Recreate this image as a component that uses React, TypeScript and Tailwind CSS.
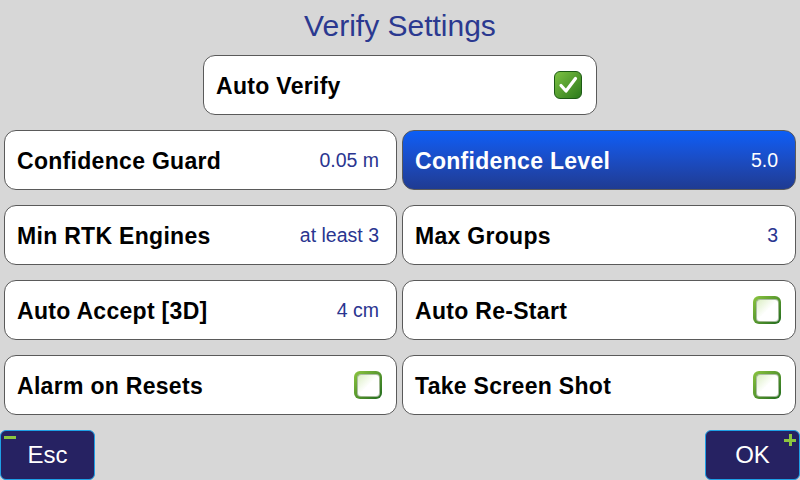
import React, { useState } from "react";

interface Setting {
  label: string;
  value?: string;
  checkbox?: boolean;
  checked?: boolean;
  active?: boolean;
}

const settings: Setting[] = [
  { label: "Confidence Guard", value: "0.05 m" },
  { label: "Confidence Level", value: "5.0", active: true },
  { label: "Min RTK Engines", value: "at least 3" },
  { label: "Max Groups", value: "3" },
  { label: "Auto Accept [3D]", value: "4 cm" },
  { label: "Auto Re-Start", checkbox: true, checked: false },
  { label: "Alarm on Resets", checkbox: true, checked: false },
  { label: "Take Screen Shot", checkbox: true, checked: false },
];

const CheckBox: React.FC<{ checked: boolean }> = ({ checked }) => {
  if (checked) {
    return (
      <div className="w-[28px] h-[28px] rounded-[6px] border-[1.5px] border-[#1c5a14] bg-gradient-to-br from-[#7cc242] to-[#2a7a1c] flex items-center justify-center">
        <svg width="22" height="22" viewBox="0 0 22 22">
          <path
            d="M4 11.5 L9 17 L18.5 4.5"
            fill="none"
            stroke="#ffffff"
            strokeWidth="3.2"
            strokeLinecap="round"
            strokeLinejoin="round"
          />
        </svg>
      </div>
    );
  }
  return (
    <div className="w-[28px] h-[28px] rounded-[6px] bg-gradient-to-br from-[#8cc63f] to-[#1e6b1e] p-[2.5px]">
      <div className="w-full h-full rounded-[4px] bg-gradient-to-br from-[#dcefc4] via-[#ffffff] to-[#ffffff] border border-[#2e5a1c]/40" />
    </div>
  );
};

const SettingRow: React.FC<{ item: Setting; onToggle: () => void }> = ({ item, onToggle }) => {
  const base =
    "h-[60px] rounded-[12px] border-[1.5px] border-[#5a5a5a] flex items-center justify-between pl-[12px] cursor-pointer";
  return (
    <div
      onClick={onToggle}
      className={`${base} ${
        item.active
          ? "bg-gradient-to-b from-[#0a5ef7] to-[#1f3b92] text-white"
          : "bg-white text-black"
      } ${item.checkbox ? "pr-[14px]" : "pr-[17px]"}`}
    >
      <span className="text-[23px] font-bold tracking-[0.3px] pt-[2px]">{item.label}</span>
      {item.checkbox ? (
        <CheckBox checked={!!item.checked} />
      ) : (
        <span className={`text-[19.5px] pt-[1px] ${item.active ? "text-white" : "text-[#2a3590]"}`}>
          {item.value}
        </span>
      )}
    </div>
  );
};

const App: React.FC = () => {
  const [autoVerify, setAutoVerify] = useState(true);
  const [rows, setRows] = useState<Setting[]>(settings);

  const toggle = (i: number) => {
    setRows((prev) =>
      prev.map((r, idx) => (idx === i && r.checkbox ? { ...r, checked: !r.checked } : r)),
    );
  };

  return (
    <div
      className="w-[800px] h-[480px] bg-[#d7d7d7] flex flex-col overflow-hidden"
      style={{ fontFamily: '"Liberation Sans", Arial, sans-serif' }}
    >
      <div className="h-[52px] flex items-center justify-center text-[30px] text-[#2b3990]">
        Verify Settings
      </div>

      <div className="mt-[4px] flex justify-center">
        <div
          onClick={() => setAutoVerify(!autoVerify)}
          className="w-[394px] h-[60px] rounded-[12px] border-[1.5px] border-[#5a5a5a] bg-white flex items-center justify-between pl-[12px] pr-[14px] cursor-pointer"
        >
          <span className="text-[23px] font-bold tracking-[0.3px] pt-[2px] text-black">Auto Verify</span>
          <CheckBox checked={autoVerify} />
        </div>
      </div>

      <div className="mt-[15px] px-[4px] grid grid-cols-[393px_394px] gap-x-[5px] gap-y-[15px]">
        {rows.map((item, i) => (
          <SettingRow key={item.label} item={item} onToggle={() => toggle(i)} />
        ))}
      </div>

      <div className="mt-[15px] flex justify-between">
        <button className="relative w-[95px] h-[50px] bg-[#262262] border-[1.5px] border-[#1ea0e6] rounded-[6px] text-white text-[24px] flex items-center justify-center">
          <span className="absolute left-[3px] top-[5px] w-[12px] h-[3px] bg-[#8cc63f]" />
          Esc
        </button>
        <button className="relative w-[95px] h-[50px] bg-[#262262] border-[1.5px] border-[#1ea0e6] rounded-[6px] text-white text-[24px] flex items-center justify-center">
          <span className="absolute right-[3px] top-[3px] w-[12px] h-[12px]">
            <span className="absolute left-0 top-[4.5px] w-[12px] h-[3px] bg-[#8cc63f]" />
            <span className="absolute top-0 left-[4.5px] w-[3px] h-[12px] bg-[#8cc63f]" />
          </span>
          OK
        </button>
      </div>
    </div>
  );
};

export default App;
